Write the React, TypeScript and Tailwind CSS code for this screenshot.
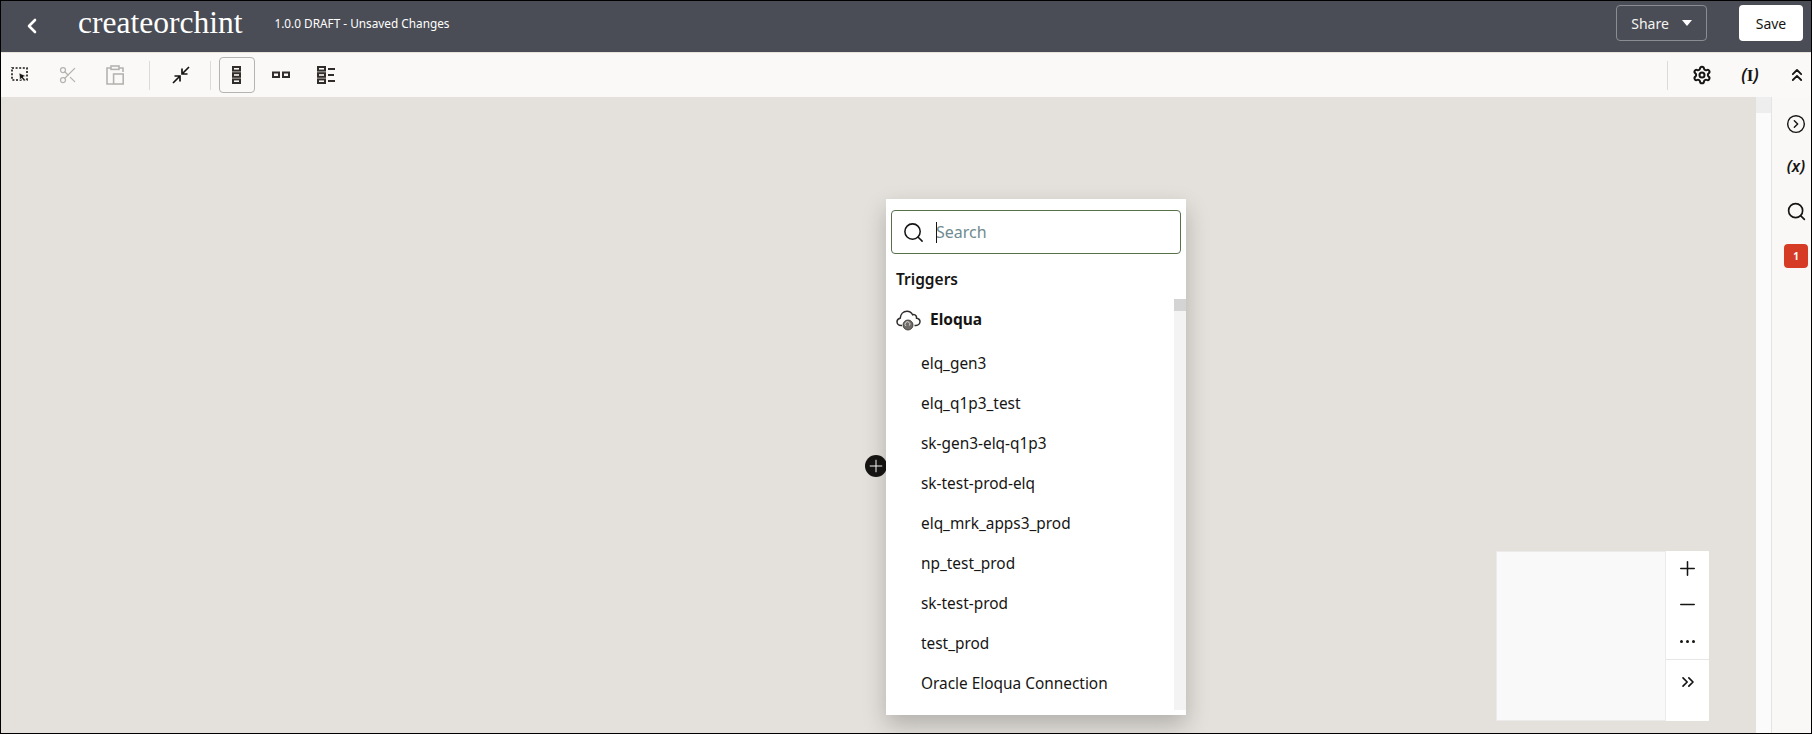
import { ChevronLeft, ChevronsRight, ChevronsUp, CircleChevronRight, Minus, Plus, Scissors, Search, Settings } from 'lucide-react'

const CONNECTIONS = [
  'elq_gen3',
  'elq_q1p3_test',
  'sk-gen3-elq-q1p3',
  'sk-test-prod-elq',
  'elq_mrk_apps3_prod',
  'np_test_prod',
  'sk-test-prod',
  'test_prod',
  'Oracle Eloqua Connection',
]

function SelectIcon() {
  return (
    <svg width="18" height="18" viewBox="0 0 18 18" fill="none">
      <rect x="1" y="2" width="15" height="12" stroke="#161513" strokeWidth="1.6" strokeDasharray="2 1.6" />
      <path d="M8 7l7 3-3 1 2.5 3-1.5 1.2-2.3-3L9 14z" fill="#161513" stroke="#fbf9f8" strokeWidth=".6" />
    </svg>
  )
}

function PasteIcon() {
  return (
    <svg width="18" height="20" viewBox="0 0 18 20" fill="none" stroke="#b5b3b0" strokeWidth="1.6">
      <path d="M5 3H1v16h6" />
      <path d="M13 3h4v4" />
      <rect x="5" y="1" width="8" height="3.4" />
      <rect x="7.6" y="9" width="9.6" height="10" />
    </svg>
  )
}

function CollapseIcon() {
  return (
    <svg width="20" height="20" viewBox="0 0 20 20" fill="none" stroke="#161513" strokeWidth="1.7">
      <path d="M18 2l-7 7M11 3.5V9h5.5" />
      <path d="M2 18l7-7M9 16.5V11H3.5" />
    </svg>
  )
}

function VerticalIcon() {
  return (
    <svg width="10" height="18" viewBox="0 0 10 18" fill="none" stroke="#312d2a" strokeWidth="2">
      <rect x="1" y="1" width="7" height="3.6" />
      <rect x="1" y="7.2" width="7" height="3.6" />
      <rect x="1" y="13.4" width="7" height="3.6" />
    </svg>
  )
}

function HorizontalIcon() {
  return (
    <svg width="18" height="8" viewBox="0 0 18 8" fill="none" stroke="#312d2a" strokeWidth="2">
      <rect x="1" y="1.5" width="6" height="4.5" />
      <rect x="11" y="1.5" width="6" height="4.5" />
    </svg>
  )
}

function TreeIcon() {
  return (
    <svg width="18" height="18" viewBox="0 0 18 18" fill="none" stroke="#312d2a" strokeWidth="2">
      <rect x="1" y="1" width="7" height="3.6" />
      <rect x="1" y="7.2" width="7" height="3.6" />
      <rect x="1" y="13.4" width="7" height="3.6" />
      <path d="M11 3h7M11 9h6M11 15h7" strokeWidth="1.8" />
    </svg>
  )
}

function CloudIcon() {
  return (
    <svg width="25" height="22" viewBox="0 0 25 22" fill="none">
      <path
        d="M6 16.5H5C2.8 16.5 1 14.8 1 12.8c0-1.8 1.4-3.2 3.2-3.6C4.6 5.4 7.2 2.2 11 2.2c2.6 0 4.6 1.5 5.6 3.6 .8-.4 2.6-.3 3.4 1 .5.7.6 1.4.5 2.4 2 .3 3.5 1.7 3.5 3.4 0 2-1.8 3.9-4 3.9h-1.5"
        stroke="#312d2a"
        strokeWidth="1.5"
      />
      <circle cx="12" cy="16" r="5" fill="#6f6c69" stroke="#312d2a" strokeWidth=".8" />
      <path d="M10 17a2.4 2.4 0 1 1 3.4-.4" stroke="#d8d6d4" strokeWidth="1" />
    </svg>
  )
}

export default function App() {
  return (
    <div className="w-[1812px] h-[734px] flex flex-col border border-black bg-[#e4e1dc] font-['Noto_Sans',sans-serif] text-[#161513] overflow-hidden">
      {/* Header */}
      <header className="h-[51px] shrink-0 flex items-center bg-[#4a4d55] text-white">
        <ChevronLeft className="ml-[19px] -mt-[2px]" size={24} strokeWidth={2.6} />
        <h1 className="ml-[34px] font-['Liberation_Serif',serif] text-[31.5px] leading-none -mt-[7px]">createorchint</h1>
        <span className="ml-[32px] text-[11.8px] -mt-[6px] text-white">1.0.0 DRAFT - Unsaved Changes</span>
        <button className="ml-auto h-[36px] w-[91px] flex items-center justify-center gap-[13px] rounded border border-[#8b8d92] text-[14px] text-[#f5f4f2] -mt-[7px]">
          Share
          <span className="w-0 h-0 border-x-[5px] border-x-transparent border-t-[6px] border-t-white" />
        </button>
        <button className="ml-[32px] mr-[8px] h-[36px] w-[64px] rounded bg-white text-[14px] text-[#161513] -mt-[7px]">Save</button>
      </header>

      {/* Toolbar */}
      <div className="h-[45px] shrink-0 flex items-center bg-[#fbf9f8] border-t border-[#e9e5dc]">
        <div className="ml-[10px] w-[18px] flex justify-center"><SelectIcon /></div>
        <Scissors className="ml-[29px] text-[#b5b3b0]" size={20} strokeWidth={1.5} />
        <div className="ml-[28px]"><PasteIcon /></div>
        <div className="ml-[25px] w-px h-[29px] bg-[#dedbd6]" />
        <div className="ml-[21px]"><CollapseIcon /></div>
        <div className="ml-[19px] w-px h-[29px] bg-[#dedbd6]" />
        <button className="ml-[8px] w-[36px] h-[36px] flex items-center justify-center rounded border border-[#b5b3b0]">
          <VerticalIcon />
        </button>
        <div className="ml-[17px]"><HorizontalIcon /></div>
        <div className="ml-[27px]"><TreeIcon /></div>
        <div className="ml-auto w-px h-[29px] bg-[#dedbd6]" />
        <Settings className="ml-[24px]" size={20} strokeWidth={2.4} />
        <span className="ml-[24px] w-[28px] text-center text-[17px] font-semibold italic">(<span className="font-['Liberation_Serif',serif] font-bold not-italic">I</span>)</span>
        <ChevronsUp className="ml-[23px] mr-[4px]" size={20} strokeWidth={2.2} />
      </div>

      <div className="flex-1 flex min-h-0">
        {/* Canvas */}
        <main className="relative flex-1">
          <div className="absolute left-[864px] top-[358px] w-[22px] h-[22px] rounded-full bg-[#161513] text-white flex items-center justify-center">
            <Plus size={20} strokeWidth={1.2} />
          </div>

          {/* Add trigger popup */}
          <div className="absolute left-[885px] top-[102px] w-[300px] h-[516px] bg-white shadow-[0_10px_22px_rgba(0,0,0,0.22)] flex flex-col">
            <div className="mx-[5px] mt-[11px] h-[44px] shrink-0 relative flex items-center rounded border border-[#57704a]">
              <Search className="ml-[10px]" size={23} strokeWidth={1.6} />
              <input
                readOnly
                placeholder="Search"
                className="ml-[11px] flex-1 min-w-0 bg-transparent text-[16px] outline-none placeholder:text-[#6f8a90]"
              />
              <span className="absolute left-[44px] top-[11px] w-px h-[21px] bg-[#161513]" />
            </div>
            <div className="mx-[10px] mt-[13px] text-[15.5px] font-semibold leading-[24px]">Triggers</div>
            <div className="mt-[9px] flex-1 flex min-h-0">
              <div className="flex-1 min-w-0">
                <div className="h-[40px] pl-[10px] flex items-center gap-[9px]">
                  <CloudIcon />
                  <span className="text-[15.5px] font-bold">Eloqua</span>
                </div>
                <ul className="mt-[4px]">
                  {CONNECTIONS.map(name => (
                    <li key={name} className="h-[40px] pl-[35px] flex items-center text-[15.4px] text-[#161513]">
                      {name}
                    </li>
                  ))}
                </ul>
              </div>
              <div className="w-[12px] -mt-[1px] mb-[5px] bg-[#f3f3f3]">
                <div className="h-[12px] bg-[#d4d4d4]" />
              </div>
            </div>
          </div>

          {/* Minimap */}
          <div className="absolute left-[1495px] top-[454px] w-[213px] h-[170px] flex">
            <div className="flex-1 bg-[#f9f9f9] border border-[#ebebeb]" />
            <div className="w-[43px] bg-white flex flex-col items-center">
              <div className="w-full h-[109px] flex flex-col items-center border-b border-[#e6e6e6]">
                <Plus className="mt-[6px]" size={23} strokeWidth={1.6} />
                <Minus className="mt-[13px]" size={23} strokeWidth={1.6} />
                <div className="mt-[24px] flex gap-[3px]">
                  <span className="w-[3px] h-[3px] rounded-full bg-[#161513]" />
                  <span className="w-[3px] h-[3px] rounded-full bg-[#161513]" />
                  <span className="w-[3px] h-[3px] rounded-full bg-[#161513]" />
                </div>
              </div>
              <ChevronsRight className="mt-[12px]" size={20} strokeWidth={2} />
            </div>
          </div>
        </main>

        {/* Scrollbar strip */}
        <div className="w-[15px] bg-[#fbfbfb]">
          <div className="h-[16px] bg-[#eeeeee]" />
        </div>

        {/* Right rail */}
        <aside className="w-[40px] pl-[9px] bg-[#f9f8f6] border-l border-[#e4e4e4] flex flex-col items-center">
          <CircleChevronRight className="mt-[17px]" size={20} strokeWidth={1.7} />
          <span className="mt-[20px] h-[24px] text-[16px] font-semibold italic leading-[24px]">(x)</span>
          <Search className="mt-[23px]" size={21} strokeWidth={1.9} />
          <span className="mt-[22px] w-[24px] h-[24px] rounded bg-[#d63b25] text-white text-[10px] font-bold flex items-center justify-center">1</span>
        </aside>
      </div>
    </div>
  )
}
